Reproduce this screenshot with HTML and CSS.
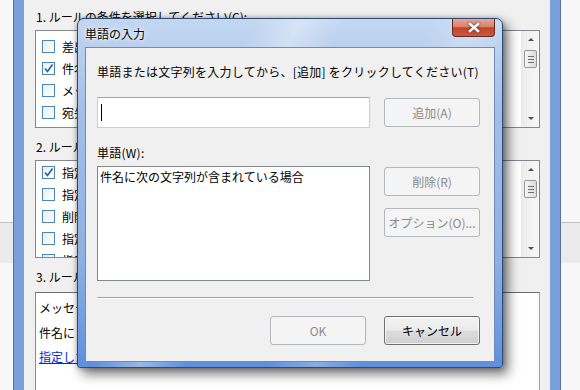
FILE: index.html
```html
<!DOCTYPE html>
<html lang="ja">
<head>
    <meta charset="UTF-8">
    <title>単語の入力</title>
    <link rel="stylesheet" href="styles.css">
</head>
<body>

<div class="stage">

    <!-- rules wizard behind the dialog -->
    <div class="rules">
        <div class="caption">1. ルールの条件を選択してください(C):</div>
        <div class="listbox first">
            <ul class="items">
                <li><span class="check"></span>差出人が [ユーザーまたはグループ] の場合</li>
                <li><span class="check"><svg viewBox="0 0 11 11"><path d="M2 5.5 L4.5 8.5 L9.5 1.5"/></svg></span>件名に [特定の文字] が含まれる場合</li>
                <li><span class="check"></span>メッセージ本文に [特定の文字] が含まれる場合</li>
                <li><span class="check"></span>宛先が [ユーザーまたはグループ] の場合</li>
                <li><span class="check"></span>差出人のアドレスに [特定の文字] が含まれる場合</li>
            </ul>
            <div class="scrollbar">
                <div class="arrow"><span class="tri up"></span></div>
                <div class="track"><div class="thumb"><i></i><i></i><i></i></div></div>
                <div class="arrow"><span class="tri down"></span></div>
            </div>
        </div>

        <div class="caption second">2. ルールの処理を選択してください(A):</div>
        <div class="listbox">
            <ul class="items">
                <li><span class="check"><svg viewBox="0 0 11 11"><path d="M2 5.5 L4.5 8.5 L9.5 1.5"/></svg></span>指定フォルダーへ移動する</li>
                <li><span class="check"></span>指定フォルダーへコピーする</li>
                <li><span class="check"></span>削除する</li>
                <li><span class="check"></span>指定した [ユーザーまたはグループ] に転送する</li>
                <li><span class="check"></span>指定した [ユーザーまたはグループ] に添付ファイルとして転送する</li>
            </ul>
            <div class="scrollbar">
                <div class="arrow"><span class="tri up"></span></div>
                <div class="track"><div class="thumb"><i></i><i></i><i></i></div></div>
                <div class="arrow"><span class="tri down"></span></div>
            </div>
        </div>

        <div class="caption third">3. ルールの説明を編集してください (下線の付いた文字をクリックしてください)(D):</div>
        <div class="description">
            <p>メッセージの受信後にこのルールを適用する</p>
            <p>件名に <a href="#">次の文字列</a> が含まれる場合</p>
            <p><a href="#">指定したフォルダー</a> へ移動する</p>
        </div>
    </div>

    <!-- word entry dialog -->
    <div class="dialog">
        <div class="titlebar">
            <span class="title">単語の入力</span>
            <div class="close">
                <svg viewBox="0 0 14 11"><path d="M3 2 L11 9 M11 2 L3 9"/></svg>
            </div>
        </div>
        <div class="client">
            <div class="label">単語または文字列を入力してから、[追加] をクリックしてください(T)</div>
            <div class="entry">
                <div class="textbox"><span class="caret"></span></div>
                <button class="btn" disabled>追加(A)</button>
            </div>
            <div class="label words">単語(W):</div>
            <div class="wordrow">
                <div class="wordlist">件名に次の文字列が含まれている場合</div>
                <div class="side">
                    <button class="btn" disabled>削除(R)</button>
                    <button class="btn" disabled>オプション(O)...</button>
                </div>
            </div>
            <div class="separator"></div>
            <div class="footer">
                <button class="btn" disabled>OK</button>
                <button class="btn normal">キャンセル</button>
            </div>
        </div>
    </div>

</div>

</body>
</html>
```

FILE: styles.css
```css
/* page and desktop behind the windows */
body {
    margin: 0;
    font-family: "Noto Sans CJK JP", sans-serif;
    font-size: 12px;
    color: #000;
}

.stage {
    width: 580px;
    height: 390px;
    position: relative;
    overflow: hidden;
    background: linear-gradient(to bottom, #f7f7f7 0 222px, #c2c2c2 222px 223px, #ebebeb 223px 263px, #f7f7f7 263px);
}

/* rules wizard window */
.rules {
    margin-left: 14px;
    width: 546px;
    height: 390px;
    box-sizing: border-box;
    border-left: 10px solid #7b9fdb;
    border-right: 10px solid #7b9fdb;
    box-shadow: -1px 0 #5b6f93, 1px 0 #5b6f93;
    background: #f0f0f0;
    padding: 9px 10px 0 11px;
}

.caption {
    line-height: 16px;
    padding-left: 1px;
    white-space: nowrap;
    overflow: hidden;
}

.caption.second {
    margin-top: 11px;
}

.caption.third {
    margin-top: 11px;
}

.listbox {
    margin-top: 5px;
    height: 98px;
    box-sizing: border-box;
    border: 1px solid #828790;
    background: #fff;
    display: flex;
}

.items {
    flex: 1;
    list-style: none;
    margin: 0;
    padding: 0;
    overflow: hidden;
}

.listbox.first .items {
    padding-top: 4px;
}

.items li {
    height: 22px;
    display: flex;
    align-items: center;
    gap: 7px;
    padding-left: 6px;
    white-space: nowrap;
}

.check {
    width: 13px;
    height: 13px;
    box-sizing: border-box;
    border: 1px solid #4a86b6;
    background: linear-gradient(135deg, #e9eef3, #fff);
    display: flex;
    align-items: center;
    justify-content: center;
    flex-shrink: 0;
}

.check svg {
    width: 11px;
    height: 11px;
}

.check path {
    fill: none;
    stroke: #2b5c9c;
    stroke-width: 1.6;
}

/* scrollbar */
.scrollbar {
    width: 17px;
    border-left: 1px solid #e8e8e8;
    background: linear-gradient(to right, #ececec, #f8f8f8);
    display: flex;
    flex-direction: column;
}

.arrow {
    height: 17px;
    display: flex;
    align-items: center;
    justify-content: center;
}

.tri {
    width: 0;
    height: 0;
    border-left: 3px solid transparent;
    border-right: 3px solid transparent;
}

.tri.up {
    border-bottom: 3px solid #4e4e4e;
}

.tri.down {
    border-top: 3px solid #4e4e4e;
}

.track {
    flex: 1;
    padding: 2px 2px 0;
}

.thumb {
    height: 18px;
    box-sizing: border-box;
    border: 1px solid #979797;
    border-radius: 2px;
    background: linear-gradient(to right, #f6f6f6, #dcdcdc);
    display: flex;
    flex-direction: column;
    align-items: center;
    justify-content: center;
    gap: 2px;
}

.thumb i {
    display: block;
    width: 6px;
    height: 1px;
    background: #6f6f6f;
}

/* description box */
.description {
    margin-top: 7px;
    height: 120px;
    box-sizing: border-box;
    border: 1px solid #a5a5a5;
    border-top-color: #6b6b6b;
    border-left-color: #8a8a8a;
    background: #fff;
    padding: 7px 0 0 3px;
    white-space: nowrap;
    overflow: hidden;
}

.description p {
    margin: 0 0 8.5px;
    line-height: 16px;
}

.description a {
    color: #0026e0;
}

/* dialog */
.dialog {
    position: absolute;
    left: 77px;
    top: 18px;
    width: 426px;
    height: 350px;
    box-sizing: border-box;
    border: 1px solid #2d4a7a;
    border-radius: 7px 7px 3px 3px;
    background:
        linear-gradient(115deg, transparent 0 30%, rgba(255, 255, 255, 0.35) 38%, transparent 46%, transparent 60%, rgba(255, 255, 255, 0.25) 68%, transparent 76%),
        linear-gradient(to bottom, #c3d7f1, #a4c0e8 25%, #8db0e2 70%, #5f8fdc);
    box-shadow: 5px 6px 12px rgba(0, 0, 0, 0.55), 0 0 5px rgba(0, 0, 0, 0.3);
    display: flex;
    flex-direction: column;
}

.titlebar {
    height: 28px;
    display: flex;
    justify-content: space-between;
    align-items: center;
    padding-left: 7px;
}

.title {
    color: #000;
    text-shadow: 0 0 6px #fff, 0 0 3px #fff;
}

.close {
    align-self: flex-start;
    width: 43px;
    height: 18px;
    box-sizing: border-box;
    margin-right: 7px;
    border: 1px solid #6a2a22;
    border-top: none;
    border-radius: 0 0 4px 4px;
    background: linear-gradient(to bottom, #e6a595 0%, #d9836f 45%, #c3432c 52%, #c95a40 100%);
    display: flex;
    align-items: center;
    justify-content: center;
}

.close svg {
    width: 14px;
    height: 11px;
    overflow: visible;
}

.close path {
    fill: none;
    stroke: #fff;
    stroke-width: 2.6;
    stroke-linecap: square;
    filter: drop-shadow(0 0 1px #4a1a12);
}

.client {
    flex: 1;
    margin: 0 7px 5px;
    border: 1px solid #6b8cbc;
    background: #f0f0f0;
    padding: 16px 14px 0 11px;
}

.label {
    line-height: 16px;
    white-space: nowrap;
    letter-spacing: 0.25px;
}

.entry {
    margin-top: 17px;
    display: flex;
    align-items: center;
    gap: 14px;
}

.textbox {
    width: 273px;
    height: 31px;
    box-sizing: border-box;
    border: 1px solid #c8cdd6;
    border-top-color: #a0a7b4;
    background: #fff;
    padding: 6px 0 0 3px;
}

.caret {
    display: block;
    width: 1px;
    height: 17px;
    background: #000;
}

.label.words {
    margin-top: 17px;
}

.wordrow {
    margin-top: 5px;
    display: flex;
    gap: 14px;
}

.wordlist {
    width: 273px;
    height: 115px;
    box-sizing: border-box;
    border: 1px solid #828790;
    background: #fff;
    padding: 2px 0 0 2px;
    line-height: 16px;
}

.side {
    padding-top: 1px;
    display: flex;
    flex-direction: column;
    gap: 12px;
}

.btn {
    width: 96px;
    height: 29px;
    box-sizing: border-box;
    border: 1px solid #b3b8bc;
    border-radius: 3px;
    background: #f4f4f4;
    color: #8a8a8a;
    font-family: "Noto Sans CJK JP", sans-serif;
    font-size: 12px;
    padding: 0;
    white-space: nowrap;
}

.btn.normal {
    border-color: #707070;
    color: #000;
    background: linear-gradient(to bottom, #f3f3f3 0%, #ebebeb 48%, #dddddd 52%, #cfcfcf 100%);
    box-shadow: inset 0 0 0 1px rgba(255, 255, 255, 0.7);
}

.separator {
    margin-top: 16px;
    width: 376px;
    height: 1px;
    background: #a0a0a0;
    box-shadow: 0 1px #fff;
}

.footer {
    margin-top: 18px;
    display: flex;
    justify-content: flex-end;
    gap: 18px;
}
```
